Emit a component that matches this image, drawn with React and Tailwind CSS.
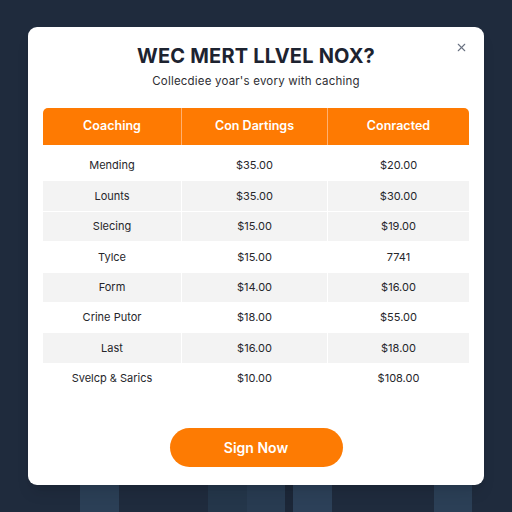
import { X } from "lucide-react";

const rows = [
  { name: "Mending", a: "$35.00", b: "$20.00", shade: false },
  { name: "Lounts", a: "$35.00", b: "$30.00", shade: true },
  { name: "Slecing", a: "$15.00", b: "$19.00", shade: true },
  { name: "Tylce", a: "$15.00", b: "7741", shade: false },
  { name: "Form", a: "$14.00", b: "$16.00", shade: true },
  { name: "Crine Putor", a: "$18.00", b: "$55.00", shade: false },
  { name: "Last", a: "$16.00", b: "$18.00", shade: true },
  { name: "Svelcp & Sarics", a: "$10.00", b: "$108.00", shade: false },
];

export default function App() {
  const font = { fontFamily: "Inter, 'Open Sans', sans-serif" };

  return (
    <div className="w-[512px] h-[512px] bg-[#1f2b3d] flex flex-col items-center pt-[27px] overflow-hidden" style={font}>
      {/* MODAL */}
      <div className="relative w-[456px] h-[458px] bg-white rounded-[9px] flex flex-col items-center pt-[17px] shadow-lg">
        <button className="absolute top-[14px] right-[16px] text-gray-500">
          <X size={13} strokeWidth={2} />
        </button>

        <h1 className="text-[20px] leading-[24px] font-bold text-[#1d2330] tracking-[0.2px]">
          WEC MERT LLVEL NOX?
        </h1>
        <p className="mt-[5px] text-[11.5px] leading-[16px] text-[#2e2e33] tracking-[0.2px]">
          Collecdiee yoar's evory with caching
        </p>

        {/* TABLE */}
        <div className="mt-[19px] w-[426px]">
          <div className="grid grid-cols-[139px_146px_141px] h-[37px] bg-[#fe7a02] rounded-t-[5px] text-white text-[12.5px] font-semibold">
            <div className="flex items-center justify-center border-r border-[#ffb070]">Coaching</div>
            <div className="flex items-center justify-center border-r border-[#ffb070]">Con Dartings</div>
            <div className="flex items-center justify-center">Conracted</div>
          </div>

          <div className="pt-[6px] flex flex-col">
            {rows.map((r) => (
              <div
                key={r.name}
                className={`grid grid-cols-[139px_146px_141px] h-[30.4px] text-[11px] text-[#26262b] border-b border-white ${
                  r.shade ? "bg-[#f3f3f3]" : "bg-white"
                }`}
              >
                <div className="flex items-center justify-center border-r border-white">{r.name}</div>
                <div className="flex items-center justify-center border-r border-white">{r.a}</div>
                <div className="flex items-center justify-center">{r.b}</div>
              </div>
            ))}
          </div>
        </div>

        <button className="mt-[34px] w-[173px] h-[39px] rounded-full bg-[#fd7b03] text-white text-[14px] font-semibold">
          Sign Now
        </button>
      </div>

      {/* BACKGROUND STRIPES */}
      <div className="flex w-[512px] h-[27px]">
        <div className="w-[80px]" />
        <div className="w-[39px] bg-[#2b3f56]" />
        <div className="w-[89px]" />
        <div className="w-[39px] bg-[#24364a]" />
        <div className="w-[38px] bg-[#283b51]" />
        <div className="w-[8px] bg-[#1c2738]" />
        <div className="w-[39px] bg-[#2c4058]" />
        <div className="w-[102px]" />
        <div className="w-[38px] bg-[#2b3f56]" />
      </div>
    </div>
  );
}
